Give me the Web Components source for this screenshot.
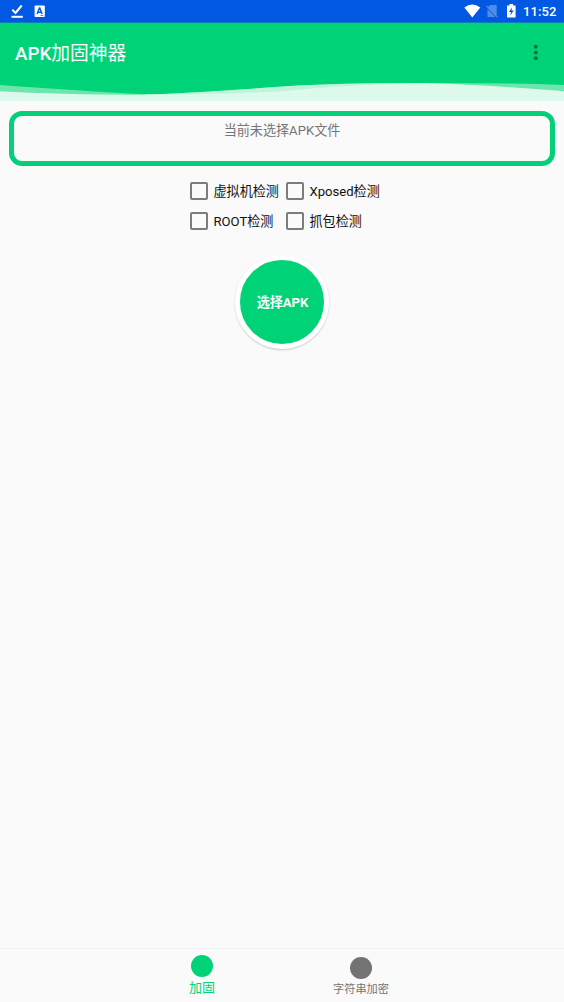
<!DOCTYPE html>
<html lang="zh-CN"><head><meta charset="utf-8"><title>APK加固神器</title>
<style>html,body{margin:0;height:100%}body{font-family:Roboto,"Noto Sans CJK SC",sans-serif;background:#fafafa;overflow:hidden}</style></head>
<body><apk-app></apk-app>
<script>
const define=(name,html)=>customElements.define(name,class extends HTMLElement{
  constructor(){super();this.attachShadow({mode:'open'}).innerHTML=html;}
});
define('status-bar',`<style>
:host{display:flex;height:23px;box-sizing:border-box;background:#0058e3;color:#fff;align-items:center;border-bottom:1px solid #0a82b4}
svg{display:block;flex:none}.sp{flex:1}
span{display:block;box-sizing:border-box;width:47px;font-size:13px;font-weight:500;line-height:22px;letter-spacing:.1px;padding:2px 0 0 6px;white-space:nowrap}
</style>
<svg width="50" height="22" viewBox="0 0 50 22"><path d="M12.3 9.6l3.2 3.3 6.2-7.4" fill="none" stroke="#fff" stroke-width="2"/><path d="M11.5 15.8h11.3v2H11.5z" fill="#fff"/><rect x="34.6" y="5.5" width="10.2" height="11.6" rx=".8" fill="#fff"/><path d="M37.1 14l2.3-6h.4l2.3 6M37.9 12.2h3.6" fill="none" stroke="#0058e3" stroke-width="1.4"/><path d="M40.5 15.5h2.8" stroke="#0058e3" stroke-width=".7"/></svg>
<div class="sp"></div>
<svg width="53" height="22" viewBox="0 0 53 22"><path d="M.3 7.4Q8.2 1.6 16.3 7.4L8.3 17.4z" fill="#fff"/><path d="M26.2 5h6.5v11.2L23.8 7.2zM23.5 8.8l8 8.3h-8z" fill="#4e8cec"/><path d="M22.3 5.8l11.2 11.4" stroke="#75a5ef" stroke-width="1"/><path d="M45.5 4h3.6v1.4h2.5v12.1h-8.6V5.4h2.5z" fill="#fff"/><path d="M48.2 7.2L44.9 12h2.1l-.7 3.5 3.4-4.9h-2.2z" fill="#0058e3"/></svg>
<span>11:52</span>`);
define('app-header',`<style>
:host{display:block;height:78px;background:#00d377;color:#fff}
header{display:flex;height:58px;align-items:center;justify-content:space-between}
h1{font-size:18.75px;line-height:26px;font-weight:500;margin:3px 0 0 15px}h1 span{font-weight:400}
button{width:24px;height:24px;padding:0;border:0;background:none;margin:0 16px 0 0}svg{display:block}
</style>
<header><h1>APK<span>加固神器</span></h1><button aria-label="更多"><svg width="24" height="24" fill="#087343"><circle cx="11.8" cy="6.8" r="2"/><circle cx="11.8" cy="12.6" r="2"/><circle cx="11.8" cy="18.2" r="2"/></svg></button></header>
<svg width="564" height="20" viewBox="0 81 564 20"><path d="M0 101V85Q80 91 145 94.3Q180 94 290 86Q350 82.5 430 83Q510 83 564 85V101z" fill="#6de6ae"/><path d="M145 94.3Q180 94 290 86Q350 82.5 430 83L400 101H145z" fill="#c0f3db"/><path d="M0 101V91.2Q55 94.5 145 94.7Q210 95 280 91.5Q355 83.5 430 83.2Q480 84.5 564 91.3V101z" fill="#dcf9ec"/></svg>`);
define('file-panel',`<style>:host{display:block;height:55px;box-sizing:border-box;margin:10px 9px 0;border:5px solid #05d07a;border-radius:13px;text-align:center;color:#757575;font-size:13.1px;line-height:18px;padding:6px 0 0}</style><slot></slot>`);
define('check-option',`<style>:host{display:flex;height:30px;align-items:center;font-size:13.1px;color:#111;white-space:nowrap}
i{display:block;width:18px;height:18px;box-sizing:border-box;border:2px solid #7c7c7c;border-radius:2px;margin-right:5.5px;flex:none}
span{line-height:18px;padding-top:2px}</style><i role="checkbox" aria-checked="false"></i><span><slot></slot></span>`);
define('select-button',`<style>:host{display:block;width:94px;height:94px;margin:19px auto 0}
button{display:block;width:94px;height:94px;box-sizing:border-box;border:5px solid #fff;border-radius:50%;background:#00d377;color:#fff;box-shadow:0 1px 2px #0003;font:700 13.1px/18px Roboto,"Noto Sans CJK SC",sans-serif;padding:1px 0 0 1px;white-space:nowrap}</style><button><slot></slot></button>`);
define('nav-item',`<style>:host{display:flex;flex-direction:column;align-items:center;width:159px;color:#737373;font-size:11.2px;line-height:16px;padding-top:8px;box-sizing:border-box}
:host([active]){color:#00d377;font-size:13px;padding-top:6px}
i{width:22px;height:22px;border-radius:50%;background:currentColor;margin-bottom:3px}:host([active]) i{margin-bottom:3px}</style><i></i><span><slot></slot></span>`);
define('apk-app',`<style>:host{display:flex;flex-direction:column;width:564px;height:1002px;background:#fafafa}
main{flex:1}.grid{display:grid;grid-template-columns:96px auto;width:192px;margin:10px 0 0 190px}
nav{display:flex;justify-content:center;height:54px;box-sizing:border-box;border-top:1px solid #f1f1f1;padding-right:1px}</style>
<status-bar></status-bar><app-header></app-header>
<main><file-panel>当前未选择APK文件</file-panel><div class="grid"><check-option>虚拟机检测</check-option><check-option>Xposed检测</check-option><check-option>ROOT检测</check-option><check-option>抓包检测</check-option></div><select-button>选择APK</select-button></main>
<nav><nav-item active>加固</nav-item><nav-item>字符串加密</nav-item></nav>`);
</script></body></html>
